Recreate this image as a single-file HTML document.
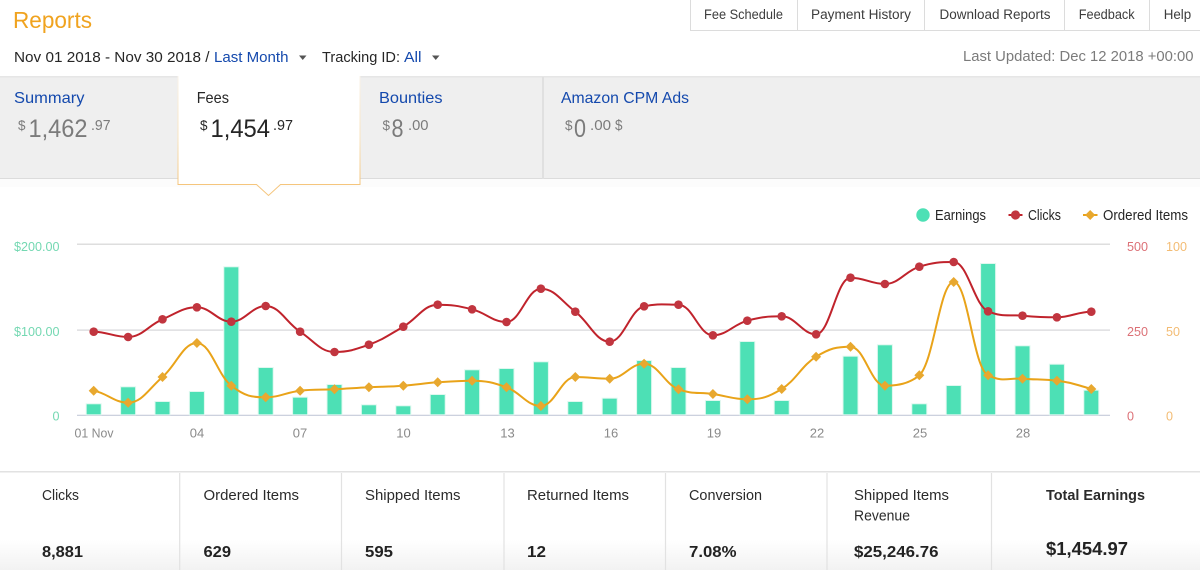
<!DOCTYPE html>
<html>
<head>
<meta charset="utf-8">
<title>Reports</title>
<style>
html,body{margin:0;padding:0;background:#fff;width:1200px;height:570px;overflow:hidden}
svg{display:block}
text{font-family:"Liberation Sans",sans-serif}
.blue{fill:#1449ad}
.dk{fill:#262626}
.gy{fill:#7b7b7b}
.tab{font-size:13.5px;fill:#3d3d3d}
.g{font-size:13px;fill:#74d8b2}
.r{font-size:13px;fill:#dc7177}
.o{font-size:13px;fill:#f3bc74}
.x{font-size:13px;fill:#8a8a8a;text-anchor:middle}
.st{font-size:14.5px;fill:#2b2b2b}
.v{font-size:16px;font-weight:bold;fill:#222}
.b{fill:#4de0b5;stroke:#dff8ef;stroke-width:1}
.c{fill:#c1353f}
.d{fill:#e8a82f}
</style>
</head>
<body>
<svg width="1200" height="570" viewBox="0 0 1200 570" xmlns="http://www.w3.org/2000/svg">
<defs>
<linearGradient id="fade" x1="0" y1="0" x2="0" y2="1"><stop offset="0" stop-color="#fff"/><stop offset="1" stop-color="#f2f2f2"/></linearGradient>
<linearGradient id="edge" x1="0" y1="0" x2="0" y2="1"><stop offset="0" stop-color="#f8f3ea"/><stop offset="0.6" stop-color="#f8e3bd"/><stop offset="1" stop-color="#f5c57c"/></linearGradient>
<path id="dm" d="M0 -5L5 0L0 5L-5 0Z"/>
</defs>

<rect width="1200" height="570" fill="#fff"/>

<!-- header -->
<text x="13" y="28" font-size="23" fill="#f0a31f" textLength="79" lengthAdjust="spacingAndGlyphs">Reports</text>
<path d="M690.5 0V30.5H1200M797.5 0V30M924.5 0V30M1064.5 0V30M1149.5 0V30" fill="none" stroke="#dcdcdc" stroke-width="1"/>
<text class="tab" x="704" y="19" textLength="79" lengthAdjust="spacingAndGlyphs">Fee Schedule</text>
<text class="tab" x="811" y="19" textLength="100" lengthAdjust="spacingAndGlyphs">Payment History</text>
<text class="tab" x="939.5" y="19" textLength="111" lengthAdjust="spacingAndGlyphs">Download Reports</text>
<text class="tab" x="1078.7" y="19" textLength="56" lengthAdjust="spacingAndGlyphs">Feedback</text>
<text class="tab" x="1163.7" y="19" textLength="27.5" lengthAdjust="spacingAndGlyphs">Help</text>

<text class="dk" x="14" y="62" font-size="15" textLength="195.5" lengthAdjust="spacingAndGlyphs">Nov 01 2018 - Nov 30 2018 /</text>
<text class="blue" x="214" y="62" font-size="15" textLength="74.5" lengthAdjust="spacingAndGlyphs">Last Month</text>
<path d="M299 55.5H306.5L302.75 60Z" fill="#555"/>
<text class="dk" x="322" y="62" font-size="15" textLength="78" lengthAdjust="spacingAndGlyphs">Tracking ID:</text>
<text class="blue" x="404" y="62" font-size="15" textLength="17.5" lengthAdjust="spacingAndGlyphs">All</text>
<path d="M432 55.5H439.5L435.75 60Z" fill="#555"/>
<text class="gy" x="963" y="61" font-size="14.5" textLength="230.5" lengthAdjust="spacingAndGlyphs">Last Updated: Dec 12 2018 +00:00</text>

<!-- tab band -->
<rect x="0" y="76" width="1200" height="103" fill="#efefef"/>
<rect x="0" y="76" width="1200" height="1.5" fill="#e6e6e6"/>
<rect x="0" y="178" width="1200" height="1" fill="#dcdcdc"/>
<rect x="542" y="77" width="2" height="102" fill="#e0e0e0"/>
<rect x="0" y="179" width="1200" height="8" fill="#fcfcfc"/>

<text class="blue" x="14" y="103" font-size="16" textLength="70.5" lengthAdjust="spacingAndGlyphs">Summary</text>
<text class="gy" x="18" y="130" font-size="14" textLength="7.5" lengthAdjust="spacingAndGlyphs">$</text>
<text class="gy" x="28.5" y="137" font-size="25" textLength="59" lengthAdjust="spacingAndGlyphs">1,462</text>
<text class="gy" x="91" y="130" font-size="15" textLength="19.5" lengthAdjust="spacingAndGlyphs">.97</text>

<path d="M178 76V184H256.5L268.5 195.5L280.5 184H360V76Z" fill="#fff"/>
<rect x="177.5" y="76" width="1" height="108" fill="url(#edge)"/>
<rect x="359.5" y="76" width="1" height="108" fill="url(#edge)"/>
<path d="M177.5 184.5H256.5L268.5 195.5L280.5 184.5H360.5" fill="none" stroke="#f5c57c" stroke-width="1"/>
<text class="dk" x="196.7" y="103" font-size="16" textLength="32.3" lengthAdjust="spacingAndGlyphs">Fees</text>
<text class="dk" x="200" y="130" font-size="14" textLength="7.5" lengthAdjust="spacingAndGlyphs">$</text>
<text class="dk" x="210.5" y="137" font-size="25" textLength="59.5" lengthAdjust="spacingAndGlyphs">1,454</text>
<text class="dk" x="273" y="130" font-size="15" textLength="20" lengthAdjust="spacingAndGlyphs">.97</text>

<text class="blue" x="379" y="103" font-size="16" textLength="63.5" lengthAdjust="spacingAndGlyphs">Bounties</text>
<text class="gy" x="382.5" y="130" font-size="14" textLength="7.5" lengthAdjust="spacingAndGlyphs">$</text>
<text class="gy" x="391.5" y="137" font-size="25" textLength="12" lengthAdjust="spacingAndGlyphs">8</text>
<text class="gy" x="408" y="130" font-size="15" textLength="20.5" lengthAdjust="spacingAndGlyphs">.00</text>

<text class="blue" x="561" y="103" font-size="16" textLength="128" lengthAdjust="spacingAndGlyphs">Amazon CPM Ads</text>
<text class="gy" x="565" y="130" font-size="14" textLength="7.5" lengthAdjust="spacingAndGlyphs">$</text>
<text class="gy" x="574" y="137" font-size="25" textLength="12" lengthAdjust="spacingAndGlyphs">0</text>
<text class="gy" x="590" y="130" font-size="15" textLength="21" lengthAdjust="spacingAndGlyphs">.00</text>
<text class="gy" x="615" y="130" font-size="15" textLength="7.5" lengthAdjust="spacingAndGlyphs">$</text>

<!-- legend -->
<circle cx="923" cy="215" r="6.7" fill="#4de0b5"/>
<text class="dk" x="935" y="220" font-size="15" textLength="51" lengthAdjust="spacingAndGlyphs">Earnings</text>
<rect x="1008.5" y="214" width="14" height="2" fill="#c0232c"/>
<circle cx="1015.5" cy="215" r="4.6" class="c"/>
<text class="dk" x="1028" y="220" font-size="15" textLength="33" lengthAdjust="spacingAndGlyphs">Clicks</text>
<rect x="1083" y="214" width="14.5" height="2" fill="#e9a319"/>
<use href="#dm" x="1090.2" y="215" class="d"/>
<text class="dk" x="1103" y="220" font-size="15" textLength="85" lengthAdjust="spacingAndGlyphs">Ordered Items</text>

<!-- axes -->
<rect x="77" y="243.5" width="1033" height="1.5" fill="#dedede"/>
<rect x="77" y="329.5" width="1033" height="1.2" fill="#d6d6d8"/>
<rect x="77" y="414.7" width="1033" height="1.3" fill="#ccd1de"/>
<text class="g" x="14" y="251" textLength="45.5" lengthAdjust="spacingAndGlyphs">$200.00</text>
<text class="g" x="14" y="336" textLength="45.5" lengthAdjust="spacingAndGlyphs">$100.00</text>
<text class="g" x="52.5" y="420.5" textLength="7" lengthAdjust="spacingAndGlyphs">0</text>
<text class="r" x="1127" y="251" textLength="21" lengthAdjust="spacingAndGlyphs">500</text>
<text class="r" x="1127" y="336" textLength="21" lengthAdjust="spacingAndGlyphs">250</text>
<text class="r" x="1127" y="420.5" textLength="7" lengthAdjust="spacingAndGlyphs">0</text>
<text class="o" x="1166" y="251" textLength="21" lengthAdjust="spacingAndGlyphs">100</text>
<text class="o" x="1166" y="336" textLength="14" lengthAdjust="spacingAndGlyphs">50</text>
<text class="o" x="1166" y="420.5" textLength="7" lengthAdjust="spacingAndGlyphs">0</text>
<text x="74.5" y="437.5" font-size="13" fill="#8a8a8a" textLength="39" lengthAdjust="spacingAndGlyphs">01 Nov</text>
<text class="x" x="197" y="437.5">04</text>
<text class="x" x="300" y="437.5">07</text>
<text class="x" x="403.5" y="437.5">10</text>
<text class="x" x="507.5" y="437.5">13</text>
<text class="x" x="611" y="437.5">16</text>
<text class="x" x="714" y="437.5">19</text>
<text class="x" x="817" y="437.5">22</text>
<text class="x" x="920" y="437.5">25</text>
<text class="x" x="1023" y="437.5">28</text>

<!-- bars -->
<rect class="b" x="86.2" y="403.8" width="15" height="11"/>
<rect class="b" x="120.6" y="386.8" width="15" height="28"/>
<rect class="b" x="155" y="401.5" width="15" height="13.3"/>
<rect class="b" x="189.4" y="391.5" width="15" height="23.3"/>
<rect class="b" x="223.8" y="266.8" width="15" height="148"/>
<rect class="b" x="258.2" y="367.5" width="15" height="47.3"/>
<rect class="b" x="292.6" y="397.2" width="15" height="17.6"/>
<rect class="b" x="327" y="384.5" width="15" height="30.3"/>
<rect class="b" x="361.4" y="404.8" width="15" height="10"/>
<rect class="b" x="395.8" y="405.8" width="15" height="9"/>
<rect class="b" x="430.2" y="394.5" width="15" height="20.3"/>
<rect class="b" x="464.6" y="369.8" width="15" height="45"/>
<rect class="b" x="499" y="368.5" width="15" height="46.3"/>
<rect class="b" x="533.4" y="361.8" width="15" height="53"/>
<rect class="b" x="567.8" y="401.5" width="15" height="13.3"/>
<rect class="b" x="602.2" y="398.2" width="15" height="16.6"/>
<rect class="b" x="636.6" y="360.5" width="15" height="54.3"/>
<rect class="b" x="671" y="367.5" width="15" height="47.3"/>
<rect class="b" x="705.4" y="400.5" width="15" height="14.3"/>
<rect class="b" x="739.8" y="341.5" width="15" height="73.3"/>
<rect class="b" x="774.2" y="400.5" width="15" height="14.3"/>
<rect class="b" x="843" y="356.2" width="15" height="58.6"/>
<rect class="b" x="877.4" y="344.8" width="15" height="70"/>
<rect class="b" x="911.8" y="403.8" width="15" height="11"/>
<rect class="b" x="946.2" y="385.5" width="15" height="29.3"/>
<rect class="b" x="980.6" y="263.5" width="15" height="151.3"/>
<rect class="b" x="1015" y="345.8" width="15" height="69"/>
<rect class="b" x="1049.4" y="364.2" width="15" height="50.6"/>
<rect class="b" x="1083.8" y="390.2" width="15" height="24.6"/>

<!-- clicks line -->
<path fill="none" stroke="#c0232c" stroke-width="2" d="M93.7 331.7C107 331.7 114.1 337 128.1 337S148.5 325.2 162.5 319.3S182.9 307.3 196.9 307.3S217.3 321.7 231.3 321.7S251.7 306 265.7 306S286.1 322.5 300.1 331.7S320.5 352 334.5 352S354.9 349.7 368.9 344.7S389.3 334.7 403.3 326.7S423.7 304.7 437.7 304.7S458.1 305.8 472.1 309.3S492.5 322 506.5 322S526.9 288.7 540.9 288.7S561.3 301.1 575.3 311.7S595.7 341.7 609.7 341.7S630.1 309.3 644.1 306.3S664.5 304.7 678.5 304.7S698.9 335.3 712.9 335.3S733.3 324.5 747.3 320.7S767.7 316.3 781.7 316.3S802.1 334.3 816.1 334.3S836.5 277.7 850.5 277.7S870.9 284 884.9 284S905.3 271.1 919.3 266.7S939.7 262 953.7 262S974.1 305.3 988.1 311.3S1008.5 314.5 1022.5 315.7S1042.9 317.3 1056.9 317.3S1077.3 311.7 1091.3 311.7"/>
<!-- ordered items line -->
<path fill="none" stroke="#e9a319" stroke-width="2" d="M93.7 390.7C107 393 114.1 402.7 128.1 402.7S148.5 389 162.5 377S182.9 343 196.9 343S217.3 374.8 231.3 385.7S251.7 397.3 265.7 397.3S286.1 392.3 300.1 390.7S320.5 390 334.5 389.3S354.9 388 368.9 387.3S389.3 386.7 403.3 385.7S423.7 383.3 437.7 382.3S458.1 380.7 472.1 380.7S492.5 382.3 506.5 387.3S526.9 406 540.9 406S561.3 377 575.3 377S595.7 378.7 609.7 378.7S630.1 363.7 644.1 363.7S664.5 384 678.5 389.3S698.9 392 712.9 394S733.3 399.3 747.3 399.3S767.7 397.5 781.7 389S802.1 365.2 816.1 356.7S836.5 346.7 850.5 346.7S870.9 385.7 884.9 385.7C897 385.7 909 384 919.3 375.3C934 362 939.7 282 953.7 282C968 282 973 368 988.1 375.3S1008.5 377.7 1022.5 378.7S1042.9 379.2 1056.9 380.7S1077.3 385 1091.3 389"/>

<!-- click markers -->
<g class="c">
<circle cx="93.7" cy="331.7" r="4.3"/><circle cx="128.1" cy="337" r="4.3"/><circle cx="162.5" cy="319.3" r="4.3"/><circle cx="196.9" cy="307.3" r="4.3"/><circle cx="231.3" cy="321.7" r="4.3"/><circle cx="265.7" cy="306" r="4.3"/><circle cx="300.1" cy="331.7" r="4.3"/><circle cx="334.5" cy="352" r="4.3"/><circle cx="368.9" cy="344.7" r="4.3"/><circle cx="403.3" cy="326.7" r="4.3"/><circle cx="437.7" cy="304.7" r="4.3"/><circle cx="472.1" cy="309.3" r="4.3"/><circle cx="506.5" cy="322" r="4.3"/><circle cx="540.9" cy="288.7" r="4.3"/><circle cx="575.3" cy="311.7" r="4.3"/><circle cx="609.7" cy="341.7" r="4.3"/><circle cx="644.1" cy="306.3" r="4.3"/><circle cx="678.5" cy="304.7" r="4.3"/><circle cx="712.9" cy="335.3" r="4.3"/><circle cx="747.3" cy="320.7" r="4.3"/><circle cx="781.7" cy="316.3" r="4.3"/><circle cx="816.1" cy="334.3" r="4.3"/><circle cx="850.5" cy="277.7" r="4.3"/><circle cx="884.9" cy="284" r="4.3"/><circle cx="919.3" cy="266.7" r="4.3"/><circle cx="953.7" cy="262" r="4.3"/><circle cx="988.1" cy="311.3" r="4.3"/><circle cx="1022.5" cy="315.7" r="4.3"/><circle cx="1056.9" cy="317.3" r="4.3"/><circle cx="1091.3" cy="311.7" r="4.3"/>
</g>
<!-- ordered markers -->
<g class="d">
<use href="#dm" x="93.7" y="390.7"/><use href="#dm" x="128.1" y="402.7"/><use href="#dm" x="162.5" y="377"/><use href="#dm" x="196.9" y="343"/><use href="#dm" x="231.3" y="385.7"/><use href="#dm" x="265.7" y="397.3"/><use href="#dm" x="300.1" y="390.7"/><use href="#dm" x="334.5" y="389.3"/><use href="#dm" x="368.9" y="387.3"/><use href="#dm" x="403.3" y="385.7"/><use href="#dm" x="437.7" y="382.3"/><use href="#dm" x="472.1" y="380.7"/><use href="#dm" x="506.5" y="387.3"/><use href="#dm" x="540.9" y="406"/><use href="#dm" x="575.3" y="377"/><use href="#dm" x="609.7" y="378.7"/><use href="#dm" x="644.1" y="363.7"/><use href="#dm" x="678.5" y="389.3"/><use href="#dm" x="712.9" y="394"/><use href="#dm" x="747.3" y="399.3"/><use href="#dm" x="781.7" y="389"/><use href="#dm" x="816.1" y="356.7"/><use href="#dm" x="850.5" y="346.7"/><use href="#dm" x="884.9" y="385.7"/><use href="#dm" x="919.3" y="375.3"/><use href="#dm" x="953.7" y="282"/><use href="#dm" x="988.1" y="375.3"/><use href="#dm" x="1022.5" y="378.7"/><use href="#dm" x="1056.9" y="380.7"/><use href="#dm" x="1091.3" y="389"/>
</g>

<!-- stats -->
<rect x="0" y="540" width="1200" height="30" fill="url(#fade)"/>
<rect x="0" y="471" width="1200" height="1.5" fill="#e2e2e2"/>
<path d="M179.7 473V570M341.5 473V570M504 473V570M665.5 473V570M827 473V570M991.5 473V570" stroke="#e2e2e2" stroke-width="1.2" fill="none"/>
<text class="st" x="42" y="500" textLength="37" lengthAdjust="spacingAndGlyphs">Clicks</text>
<text class="st" x="203.5" y="500" textLength="95.5" lengthAdjust="spacingAndGlyphs">Ordered Items</text>
<text class="st" x="365" y="500" textLength="95.5" lengthAdjust="spacingAndGlyphs">Shipped Items</text>
<text class="st" x="527" y="500" textLength="102" lengthAdjust="spacingAndGlyphs">Returned Items</text>
<text class="st" x="689" y="500" textLength="73" lengthAdjust="spacingAndGlyphs">Conversion</text>
<text class="st" x="854" y="500" textLength="95" lengthAdjust="spacingAndGlyphs">Shipped Items</text>
<text class="st" x="854" y="520.5" textLength="56" lengthAdjust="spacingAndGlyphs">Revenue</text>
<text class="st" x="1046" y="500" font-weight="bold" textLength="99" lengthAdjust="spacingAndGlyphs">Total Earnings</text>
<text class="v" x="42" y="557" textLength="41" lengthAdjust="spacingAndGlyphs">8,881</text>
<text class="v" x="203.5" y="557" textLength="27.5" lengthAdjust="spacingAndGlyphs">629</text>
<text class="v" x="365" y="557" textLength="28" lengthAdjust="spacingAndGlyphs">595</text>
<text class="v" x="527" y="557" textLength="19" lengthAdjust="spacingAndGlyphs">12</text>
<text class="v" x="689" y="557" textLength="47.5" lengthAdjust="spacingAndGlyphs">7.08%</text>
<text class="v" x="854" y="557" textLength="84.5" lengthAdjust="spacingAndGlyphs">$25,246.76</text>
<text class="v" x="1046" y="555" style="font-size:18px" textLength="82" lengthAdjust="spacingAndGlyphs">$1,454.97</text>
</svg>
</body>
</html>
